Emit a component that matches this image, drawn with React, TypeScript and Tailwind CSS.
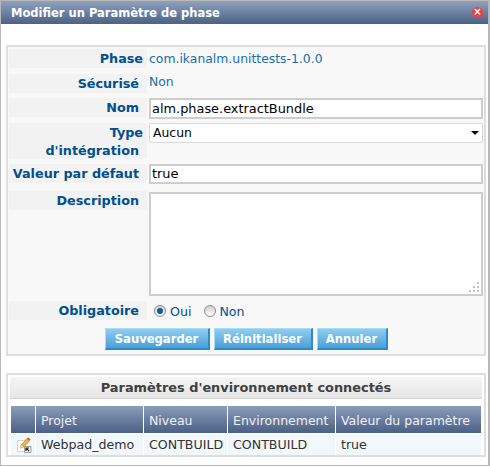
const font = "font-['DejaVu_Sans',Verdana,sans-serif]"

function FormRow({
  label,
  height,
  gap,
  children,
}: {
  label: React.ReactNode
  height: string
  gap: string
  children: React.ReactNode
}) {
  return (
    <div className={`flex ${gap}`}>
      <div className={`w-[138px] ${height} shrink-0 bg-[#f2f2f2] pr-2 pt-px text-right text-[12.75px] leading-[18px] font-bold text-[#004f8c]`}>
        {label}
      </div>
      <div className="ml-[2px] min-w-0 flex-1">{children}</div>
    </div>
  )
}

function BlueButton({ label, width }: { label: string; width: string }) {
  return (
    <button className={`${width} h-[22px] border-t border-l border-t-[#a9dcf5] border-l-[#a9dcf5] border-r-2 border-b-2 border-r-[#2a8ccb] border-b-[#2a8ccb] bg-gradient-to-b from-[#8fcdef] to-[#4a9fd8] text-center text-[11.6px] leading-[18px] font-bold text-white`}>
      {label}
    </button>
  )
}

function Radio({ checked }: { checked?: boolean }) {
  return (
    <span className="flex h-[12px] w-[12px] shrink-0 items-center justify-center rounded-full border border-[#8a8a8a] bg-gradient-to-b from-[#d0d0d0] to-white">
      {checked && <span className="h-[6px] w-[6px] rounded-full bg-[#0b5c9e]" />}
    </span>
  )
}

function EditIcon() {
  return (
    <svg width="16" height="16" viewBox="0 0 16 16" className="block">
      <path d="M1.5 3.5h8v11h-8z" fill="#fff" stroke="#c3d6ea" />
      <path d="M4 11l1-3 6-6.5 2.5 2.2-6 6.5z" fill="#f2b632" stroke="#b9801a" strokeWidth="0.7" />
      <path d="M11 1.5l2.5 2.2 1-1.2-2.4-2z" fill="#d8452f" />
      <path d="M4 11l1-3 2.5 2.2z" fill="#f6dfb0" />
      <path d="M8.5 9.5h6.5v6h-6.5z" fill="#f4f4f4" stroke="#8a8a8a" strokeWidth="0.8" />
      <path d="M13 14l-2.6-2.6M10 14v-3h3" fill="none" stroke="#222" strokeWidth="1.2" />
    </svg>
  )
}

const headCell = 'flex h-[27px] items-center bg-gradient-to-b from-[#8b9dbb] to-[#4a6085] pl-[5px] pt-[3px] text-[12.5px] text-[#eef2f7]'
const bodyCell = 'flex h-[21px] items-center bg-[#f2f7fc] pl-[5px] pt-px text-[12.6px] text-[#333]'

export default function App() {
  return (
    <div className={`${font} h-[466px] w-[490px] overflow-hidden border-t border-b border-l border-r-2 border-[#b8b8b8] bg-white`}>
      {/* Title bar */}
      <div className="flex h-[23px] items-center justify-between bg-gradient-to-b from-[#8fa1bd] to-[#4c6286] pr-[5px] pl-[10px]">
        <span className="pt-[3px] text-[11.5px] font-bold text-white">Modifier un Paramètre de phase</span>
        <span className="mb-[1px] flex h-[11px] w-[11px] items-center justify-center rounded-full bg-[#e04444] text-[10px] leading-none font-bold text-white">
          ×
        </span>
      </div>

      <div className="px-[5px]">
        {/* Form */}
        <div className="mt-[21px] h-[311px] w-[480px] border-2 border-[#dedede] bg-[#f8f8f8] px-[1px] pt-[2px] text-[#004f8c]">
          <FormRow label={<span className="relative left-[4px]">Phase</span>} height="h-[19px]" gap="mb-[5px]">
            <div className="text-[12.4px] leading-[20px] text-[#1a6ea8]">com.ikanalm.unittests-1.0.0</div>
          </FormRow>
          <FormRow label="Sécurisé" height="h-[19px]" gap="mb-[5px]">
            <div className="text-[12.4px] leading-[15px] text-[#1a6ea8]">Non</div>
          </FormRow>
          <FormRow label="Nom" height="h-[19px]" gap="mb-[4px]">
            <div className="h-[21px] border-2 border-[#cdcdcd] bg-white pl-[1px] text-[12.9px] leading-[17px] text-black">alm.phase.extractBundle</div>
          </FormRow>
          <FormRow label={<><span className="relative left-[4px]">Type</span><br />d'intégration</>} height="h-[36px]" gap="mb-[5px]">
            <div className="flex h-[20px] items-center justify-between rounded-[2px] border border-[#d8d8d8] bg-white pr-[3px] pl-[3px] text-[12.4px] text-black">
              Aucun
              <span className="h-0 w-0 border-x-[4px] border-t-[4px] border-x-transparent border-t-black" />
            </div>
          </FormRow>
          <FormRow label="Valeur par défaut" height="h-[19px]" gap="mb-[7px]">
            <div className="h-[20px] border-2 border-[#cdcdcd] bg-white pl-[1px] text-[12.9px] leading-[16px] text-black">true</div>
          </FormRow>
          <FormRow label="Description" height="h-[19px]" gap="mb-[5px]">
            <div className="relative mt-px h-[104px] border-2 border-[#cdcdcd] bg-white">
              <svg width="12" height="12" viewBox="0 0 12 12" className="absolute right-0 bottom-0" fill="#c4c4c4">
                <rect x="8" y="0" width="2" height="2" />
                <rect x="4" y="4" width="2" height="2" />
                <rect x="8" y="4" width="2" height="2" />
                <rect x="0" y="8" width="2" height="2" />
                <rect x="4" y="8" width="2" height="2" />
                <rect x="8" y="8" width="2" height="2" />
              </svg>
            </div>
          </FormRow>
          <FormRow label="Obligatoire" height="h-[19px]" gap="mb-[8px]">
            <div className="flex h-[19px] items-center pl-[5px] text-[12.6px] text-[#004f8c]">
              <Radio checked />
              <span className="ml-[4px] pt-[3px]">Oui</span>
              <span className="ml-[13px]"><Radio /></span>
              <span className="ml-[3px] pt-[3px]">Non</span>
            </div>
          </FormRow>
          <div className="flex justify-center gap-[4px]">
            <BlueButton label="Sauvegarder" width="w-[105px]" />
            <BlueButton label="Réinitialiser" width="w-[99px]" />
            <BlueButton label="Annuler" width="w-[71px]" />
          </div>
        </div>

        {/* Connected environments */}
        <div className="mt-[17px] h-[84px] w-[480px] border-2 border-[#dedede] bg-white px-[2px] pt-[2px]">
          <div className="h-[22px] border-b border-[#d4d4d4] bg-gradient-to-b from-[#f5f5f5] to-[#e6e6e6] text-center text-[12.9px] leading-[22px] font-bold text-[#404040]">
            Paramètres d'environnement connectés
          </div>
          <div className="mt-[7px] grid grid-cols-[24px_107px_83px_107px_145px] gap-x-px gap-y-px pl-px text-nowrap">
            <div className={headCell} />
            <div className={headCell}>Projet</div>
            <div className={headCell}>Niveau</div>
            <div className={headCell}>Environnement</div>
            <div className={headCell}>Valeur du paramètre</div>
            <div className={`${bodyCell} pl-[4px]`}><EditIcon /></div>
            <div className={bodyCell}>Webpad_demo</div>
            <div className={bodyCell}>CONTBUILD</div>
            <div className={bodyCell}>CONTBUILD</div>
            <div className={bodyCell}>true</div>
          </div>
        </div>
      </div>
    </div>
  )
}
